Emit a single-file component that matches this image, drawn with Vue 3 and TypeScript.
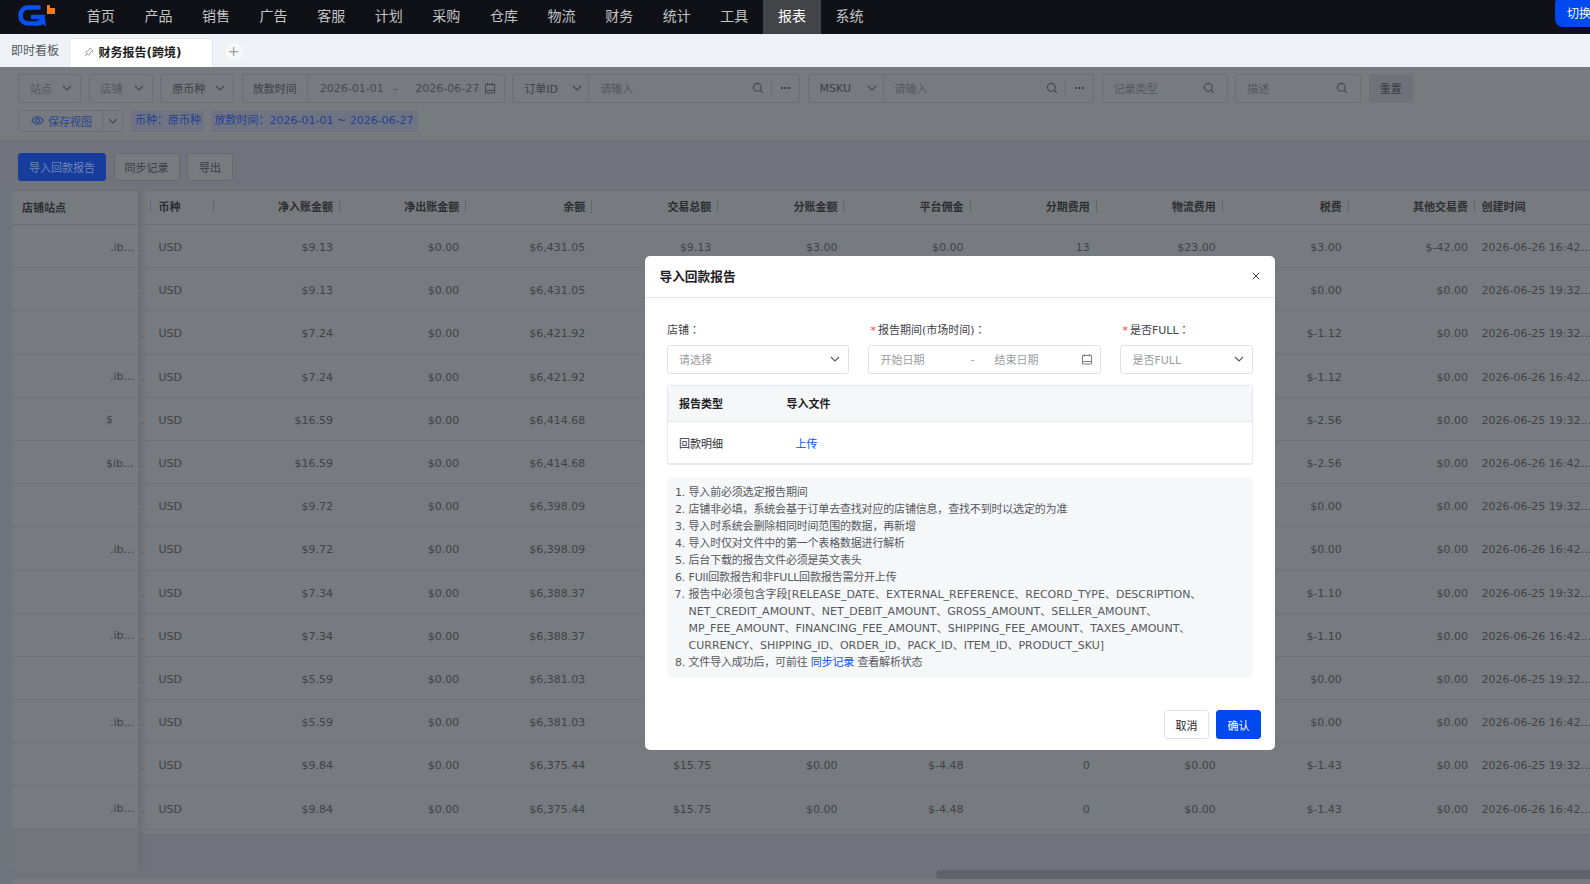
<script setup lang="ts">
const menus = ["首页", "产品", "销售", "广告", "客服", "计划", "采购", "仓库", "物流", "财务", "统计", "工具", "报表", "系统"];

const columns = ["净入账金额", "净出账金额", "余额", "交易总额", "分账金额", "平台佣金", "分期费用", "物流费用", "税费", "其他交易费"];

interface Row {
  shop: string;
  cells: string[];
  time: string;
}

const T25 = "2026-06-25 19:32:11";
const T26 = "2026-06-26 16:42:08";

// the five middle columns sit behind the dialog on most rows, so they stay empty there
function row(shop: string, net: string, balance: string, tax: string, other: string, time: string, mid: string[] = ["", "", "", "", ""]): Row {
  return { shop, cells: [net, "$0.00", balance, ...mid, tax, other], time };
}

const lastMid = ["$15.75", "$0.00", "$-4.48", "0", "$0.00"];

const rows: Row[] = [
  row(".ib...", "$9.13", "$6,431.05", "$3.00", "$-42.00", T26, ["$9.13", "$3.00", "$0.00", "13", "$23.00"]),
  row("", "$9.13", "$6,431.05", "$0.00", "$0.00", T25),
  row("", "$7.24", "$6,421.92", "$-1.12", "$0.00", T25),
  row(".ib...", "$7.24", "$6,421.92", "$-1.12", "$0.00", T26),
  row("$", "$16.59", "$6,414.68", "$-2.56", "$0.00", T25),
  row("$ib...", "$16.59", "$6,414.68", "$-2.56", "$0.00", T26),
  row("", "$9.72", "$6,398.09", "$0.00", "$0.00", T25),
  row(".ib...", "$9.72", "$6,398.09", "$0.00", "$0.00", T26),
  row("", "$7.34", "$6,388.37", "$-1.10", "$0.00", T25),
  row(".ib...", "$7.34", "$6,388.37", "$-1.10", "$0.00", T26),
  row("", "$5.59", "$6,381.03", "$0.00", "$0.00", T25),
  row(".ib...", "$5.59", "$6,381.03", "$0.00", "$0.00", T26),
  row("", "$9.84", "$6,375.44", "$-1.43", "$0.00", T25, lastMid),
  row(".ib...", "$9.84", "$6,375.44", "$-1.43", "$0.00", T26, lastMid),
];

const notes = [
  "导入前必须选定报告期间",
  "店铺非必填，系统会基于订单去查找对应的店铺信息，查找不到时以选定的为准",
  "导入时系统会删除相同时间范围的数据，再新增",
  "导入时仅对文件中的第一个表格数据进行解析",
  "后台下载的报告文件必须是英文表头",
  "FUll回款报告和非FULL回款报告需分开上传",
];
const fieldNote =
  "报告中必须包含字段[RELEASE_DATE、EXTERNAL_REFERENCE、RECORD_TYPE、DESCRIPTION、NET_CREDIT_AMOUNT、NET_DEBIT_AMOUNT、GROSS_AMOUNT、SELLER_AMOUNT、MP_FEE_AMOUNT、FINANCING_FEE_AMOUNT、SHIPPING_FEE_AMOUNT、TAXES_AMOUNT、CURRENCY、SHIPPING_ID、ORDER_ID、PACK_ID、ITEM_ID、PRODUCT_SKU]";
</script>

<template>
  <svg class="defs" aria-hidden="true">
    <symbol id="chev" viewBox="0 0 12 12"><path d="M2 4l4 4 4-4" fill="none" stroke="currentColor" stroke-width="1.1" /></symbol>
    <symbol id="search" viewBox="0 0 12 12"><circle cx="5.3" cy="5.3" r="3.9" fill="none" stroke="currentColor" stroke-width="1.1" /><path d="M8.1 8.1l2.6 2.6" fill="none" stroke="currentColor" stroke-width="1.3" /></symbol>
    <symbol id="cal" viewBox="0 0 12 12"><path d="M1.500 2.500h9v8.500h-9zM1.500 8.500h9M3.500 1v2.500M8.500 1v2.500" fill="none" stroke="currentColor" stroke-width="1" /></symbol>
    <symbol id="dots" viewBox="0 0 12 12"><circle cx="2.200" cy="6" r="1" fill="currentColor" /><circle cx="6" cy="6" r="1" fill="currentColor" /><circle cx="9.800" cy="6" r="1" fill="currentColor" /></symbol>
  </svg>

  <div class="page">
    <header class="topbar">
      <svg class="logo" viewBox="0 0 38 22" width="38" height="22">
        <path d="M22.500 2.500H10.500C5.500 2.500 2.500 5.800 2.500 10.500s3 8 8 8h9.500c3 0 4.500-1.600 4.500-6.500H13" fill="none" stroke="#0b50f5" stroke-width="4.600" />
        <path d="M19 14.500h8.500V22z" fill="#0b50f5" transform="rotate(-8 23 18)" />
        <path d="M29 0h3v3h5v6h-8z" fill="#f07a25" />
      </svg>
      <nav class="menu">
        <a v-for="m in menus" :key="m" class="menu-item" :class="{ active: m === '报表' }">{{ m }}</a>
      </nav>
      <div class="switch"><span>切换系统</span></div>
    </header>

    <div class="tabs">
      <span class="tab-plain">即时看板</span>
      <div class="tab-active">
        <svg class="pin" viewBox="0 0 12 12" width="10" height="10"><path d="M7 1.200l3.800 3.800-2 .6-1.800 1.800-.2 2-1.400.2-3-3 .2-1.400 2-.2L6.400 3.200z M4 8l-3 3" fill="none" stroke="#8b8f96" stroke-width="1" /></svg>
        <b>财务报告(跨境)</b>
      </div>
      <span class="tab-add">+</span>
    </div>

    <section class="filters">
      <div class="filter-row">
        <div class="box w-site ph"><span>站点</span><svg class="ic"><use href="#chev" /></svg></div>
        <div class="box w-shop ph"><span>店铺</span><svg class="ic"><use href="#chev" /></svg></div>
        <div class="box w-cur"><span>原币种</span><svg class="ic"><use href="#chev" /></svg></div>
        <div class="box w-date group">
          <span class="addon date-addon">放款时间</span>
          <span class="date-val">2026-01-01</span>
          <span class="date-sep">-</span>
          <span class="date-val end">2026-06-27</span>
          <svg class="ic"><use href="#cal" /></svg>
        </div>
        <div class="box w-order group">
          <span class="addon sel order-sel">订单ID<svg class="ic"><use href="#chev" /></svg></span>
          <span class="input ph">请输入</span>
          <svg class="ic"><use href="#search" /></svg>
          <span class="more"><svg class="ic"><use href="#dots" /></svg></span>
        </div>
        <div class="box w-msku group">
          <span class="addon sel msku-sel">MSKU<svg class="ic"><use href="#chev" /></svg></span>
          <span class="input ph">请输入</span>
          <svg class="ic"><use href="#search" /></svg>
          <span class="more"><svg class="ic"><use href="#dots" /></svg></span>
        </div>
        <div class="box w-type ph search-box"><span>记录类型</span><svg class="ic"><use href="#search" /></svg></div>
        <div class="box w-desc ph search-box"><span>描述</span><svg class="ic"><use href="#search" /></svg></div>
        <button class="reset">重置</button>
      </div>
      <div class="filter-row second">
        <div class="view">
          <span class="view-main">
            <svg viewBox="0 0 14 14" width="13" height="13"><path d="M1 7c1.500-2.800 3.500-4 6-4s4.500 1.200 6 4c-1.500 2.800-3.500 4-6 4S2.500 9.800 1 7z" fill="none" stroke="#2a4590" stroke-width="1.200" /><circle cx="7" cy="7" r="2" fill="none" stroke="#2a4590" stroke-width="1.200" /></svg>
            保存视图
          </span>
          <span class="view-arrow"><svg class="ic"><use href="#chev" /></svg></span>
        </div>
        <span class="tag t1">币种：原币种</span>
        <span class="tag t2">放款时间：2026-01-01 ~ 2026-06-27</span>
      </div>
    </section>

    <section class="actions">
      <button class="btn primary">导入回款报告</button>
      <button class="btn sync">同步记录</button>
      <button class="btn export">导出</button>
    </section>

    <section class="table-area">
      <div class="table">
        <div class="fixed-col">
          <div class="head-cell fixed-head">店铺站点</div>
          <div v-for="(r, i) in rows" :key="i" class="fixed-cell" :class="{ dollar: r.shop.startsWith('$') }"><span>{{ r.shop }}</span></div>
        </div>
        <div class="scroll-col">
          <div class="thead">
            <div class="c-gap"></div>
            <div class="c-cur th"><span>币种</span></div>
            <div v-for="c in columns" :key="c" class="c-num th"><span>{{ c }}</span></div>
            <div class="c-time th"><span>创建时间</span></div>
          </div>
          <div v-for="(r, i) in rows" :key="i" class="tr">
            <div class="c-gap td tail">..</div>
            <div class="c-cur td">USD</div>
            <div v-for="(v, j) in r.cells" :key="j" class="c-num td">{{ v }}</div>
            <div class="c-time td">{{ r.time }}</div>
          </div>
          <div class="tfoot"></div>
        </div>
      </div>
      <div class="scrollbar"><div class="thumb"></div></div>
    </section>

    <div class="modal">
      <div class="modal-head">
        <b>导入回款报告</b>
        <svg viewBox="0 0 10 10" width="8" height="8"><path d="M1 1l8 8M9 1l-8 8" stroke="#333" stroke-width="1.200" /></svg>
      </div>
      <div class="modal-body">
        <div class="form">
          <div class="field f-shop">
            <label>店铺<span class="colon">：</span></label>
            <div class="control ph-light"><span>请选择</span><svg class="ic dark"><use href="#chev" /></svg></div>
          </div>
          <div class="field f-date">
            <label><i>*</i>报告期间(市场时间)<span class="colon">：</span></label>
            <div class="control ph-light">
              <span class="d-start">开始日期</span><span class="d-dash">-</span><span class="d-end">结束日期</span>
              <svg class="ic"><use href="#cal" /></svg>
            </div>
          </div>
          <div class="field f-full">
            <label><i>*</i>是否FULL<span class="colon">：</span></label>
            <div class="control ph-light"><span>是否FULL</span><svg class="ic dark"><use href="#chev" /></svg></div>
          </div>
        </div>

        <div class="report">
          <div class="report-head"><span class="col-a">报告类型</span><span>导入文件</span></div>
          <div class="report-row"><span class="col-a">回款明细</span><a class="upload">上传</a></div>
        </div>

        <ol class="notes">
          <li v-for="n in notes" :key="n">{{ n }}</li>
          <li class="long">{{ fieldNote }}</li>
          <li>文件导入成功后，可前往 <a>同步记录</a> 查看解析状态</li>
        </ol>
      </div>
      <div class="modal-foot">
        <button class="m-btn">取消</button>
        <button class="m-btn ok">确认</button>
      </div>
    </div>
  </div>
</template>

<style scoped>
.defs {
  position: absolute;
  width: 0;
  height: 0;
}

.page {
  position: relative;
  width: 1590px;
  height: 884px;
  overflow: hidden;
  display: flex;
  flex-direction: column;
  font-family: "DejaVu Sans", "Noto Sans CJK SC", sans-serif;
  font-size: 11px;
  color: #3a3c40;
  background: #70747c;
}

.ic {
  width: 12px;
  height: 12px;
  flex: none;
  color: #44474c;
}

/* top bar */
.topbar {
  flex: none;
  height: 34px;
  display: flex;
  align-items: stretch;
  background: #0f1116;
  position: relative;
}
.logo {
  margin: 5px 0 0 18px;
  flex: none;
}
.menu {
  display: flex;
  margin-left: 16px;
}
.menu-item {
  width: 57.6px;
  font-size: 14px;
  line-height: 32px;
  text-align: center;
  color: #c3c5c8;
}
.menu-item.active {
  background: #434448;
  color: #fff;
}
.switch {
  position: absolute;
  right: 0;
  top: 0;
  width: 35px;
  height: 27px;
  overflow: hidden;
  background: #0048f0;
  border-radius: 2px 0 0 8px;
  color: #fff;
  font-size: 12px;
  line-height: 28px;
  padding-left: 12px;
  box-sizing: border-box;
  white-space: nowrap;
}

/* tabs */
.tabs {
  flex: none;
  height: 33px;
  display: flex;
  align-items: flex-end;
  background: #eef2f6;
  color: #55585d;
  font-size: 12px;
}
.tab-plain {
  width: 68.6px;
  padding-left: 11px;
  box-sizing: border-box;
  line-height: 32px;
}
.tab-active {
  width: 144px;
  height: 29px;
  box-sizing: border-box;
  background: #fff;
  border: 1px solid #e3e6ea;
  border-bottom: 0;
  border-radius: 3px 3px 0 0;
  display: flex;
  align-items: center;
  padding: 0 0 3px 14px;
  gap: 5px;
  color: #1d1f23;
}
.tab-active b {
  font-weight: 600;
  font-size: 12px;
}
.tab-add {
  width: 18px;
  height: 18px;
  margin: 0 0 6px 12px;
  border-radius: 50%;
  background: #f6f8fa;
  color: #9a9da2;
  text-align: center;
  line-height: 17px;
  font-size: 14px;
}

/* filters */
.filters {
  flex: none;
  height: 74px;
  box-sizing: border-box;
  padding: 7px 0 0 18px;
  background: #777a7e;
  border-bottom: 1px solid #6b6e73;
}
.filter-row {
  display: flex;
  gap: 7.6px;
  height: 28.700px;
}
.filter-row.second {
  height: 21.700px;
  margin-top: 7.300px;
  gap: 8px;
}
.box {
  box-sizing: border-box;
  border: 1px solid #6a6d72;
  border-radius: 3px;
  display: flex;
  align-items: center;
  justify-content: space-between;
  padding: 0 7px 0 11px;
  color: #3d3f44;
  white-space: nowrap;
}
.search-box {
  padding-right: 12px;
}
.ph {
  color: #55585d;
}
.w-site { width: 63px; }
.w-shop { width: 64px; }
.w-cur { width: 74px; }
.w-date { width: 263px; }
.w-order { width: 287.600px; }
.w-msku { width: 286.400px; }
.w-type { width: 126px; }
.w-desc { width: 125.800px; }
.group {
  padding: 0;
  justify-content: flex-start;
}
.addon {
  height: 100%;
  display: flex;
  align-items: center;
  box-sizing: border-box;
  border-right: 1px solid #6a6d72;
  flex: none;
}
.date-addon {
  width: 65px;
  justify-content: center;
}
.date-val {
  color: #47494e;
  margin-left: 12px;
  flex: none;
}
.date-sep {
  color: #47494e;
  margin: 0 18px 0 9.500px;
  flex: none;
}
.date-val.end {
  margin-left: 0;
}
.w-date .ic {
  margin-left: 5px;
}
.sel {
  justify-content: space-between;
  padding: 0 5px 0 11px;
}
.order-sel { width: 76px; }
.msku-sel { width: 75px; }
.input {
  flex: 1;
  padding-left: 11px;
}
.more {
  width: 27px;
  height: 16px;
  margin-left: 7px;
  border-left: 1px solid #6a6d72;
  display: flex;
  align-items: center;
  justify-content: center;
  flex: none;
}
.more .ic {
  color: #25272b;
  width: 11px;
}
.reset {
  width: 44.600px;
  border: 0;
  border-radius: 3px;
  background: #6f727a;
  color: #3a3c40;
  font: inherit;
  padding: 0;
}
.view {
  width: 105px;
  box-sizing: border-box;
  border: 1px solid #6a6d72;
  border-radius: 3px;
  display: flex;
  align-items: stretch;
  color: #2a4590;
}
.view-main {
  width: 84px;
  box-sizing: border-box;
  display: flex;
  align-items: center;
  gap: 4px;
  padding-left: 12px;
  border-right: 1px solid #6a6d72;
}
.view-arrow {
  flex: 1;
  display: flex;
  align-items: center;
  justify-content: center;
}
.tag {
  box-sizing: border-box;
  background: #6f7483;
  color: #23408f;
  line-height: 21px;
  padding: 0 4px;
  white-space: nowrap;
}
.t1 { width: 72.500px; }
.t2 { width: 207px; margin-left: -1px; }

/* action buttons */
.actions {
  flex: none;
  height: 49px;
  box-sizing: border-box;
  padding: 12px 0 0 18px;
  display: flex;
  gap: 7.600px;
  align-items: flex-start;
  background: #70737b;
}
.btn {
  height: 28px;
  width: 45.600px;
  padding: 0;
  border: 1px solid #66696e;
  border-radius: 3px;
  background: #777a7e;
  color: #3a3c40;
  font: inherit;
}
.btn.primary {
  width: 88px;
  background: #163d9c;
  border-color: #163d9c;
  color: #7385b8;
}
.btn.sync {
  width: 66px;
}

/* table */
.table-area {
  flex: 1;
  min-height: 0;
  margin-left: 12px;
  display: flex;
  flex-direction: column;
  background: #777a7e;
}
.table {
  height: 680px;
  flex: none;
  display: flex;
  overflow: hidden;
  background: #70737b;
}
.fixed-col {
  position: relative;
  width: 126px;
  flex: none;
  background: #72757c;
}
.fixed-col::after {
  content: "";
  position: absolute;
  left: 100%;
  top: 0;
  bottom: 0;
  width: 9px;
  background: linear-gradient(90deg, #6b6e73, rgba(107, 110, 115, 0));
}
.fixed-head {
  height: 35px;
  display: flex;
  align-items: center;
  padding: 0 0 2px 10px;
  font-weight: 600;
  color: #2c2e32;
  background: #777a7e;
  border-top: 1px solid #6d7075;
  box-sizing: border-box;
  border-bottom: 1px solid #6a6d72;
}
.fixed-cell {
  height: 43.200px;
  box-sizing: border-box;
  background: #777a7e;
  border-bottom: 1px solid #6d7075;
  display: flex;
  align-items: center;
  padding: 2px 0 0 98px;
  color: #404247;
  white-space: nowrap;
}
.fixed-cell.dollar {
  padding-left: 94px;
}
.scroll-col {
  flex: 1;
  min-width: 0;
  overflow: hidden;
}
.thead,
.tr {
  display: flex;
  background: #777a7e;
  box-sizing: border-box;
  border-bottom: 1px solid #6b6e73;
  width: 1455px;
}
.thead {
  height: 35px;
  align-items: stretch;
  font-weight: 600;
  color: #2c2e32;
  border-top: 1px solid #6d7075;
}
.tr {
  height: 43.200px;
  align-items: center;
  border-bottom-color: #6d7075;
}
.tfoot {
  height: 4px;
  background: #777a7e;
  border-bottom: 1px solid #6b6e73;
  width: 1455px;
}
.c-gap {
  width: 12.500px;
  flex: none;
}
.c-cur {
  width: 63px;
  flex: none;
  padding-left: 8px;
  box-sizing: border-box;
}
.c-num {
  width: 126.100px;
  flex: none;
  text-align: right;
  padding-right: 6.500px;
  box-sizing: border-box;
}
.c-time {
  width: 118px;
  flex: none;
  padding-left: 7px;
  box-sizing: border-box;
  white-space: nowrap;
  overflow: hidden;
  text-overflow: ellipsis;
}
.th {
  position: relative;
  line-height: 29px;
  padding-top: 1.500px;
}
.th::before {
  content: "";
  position: absolute;
  left: -0.500px;
  top: 9px;
  bottom: 11px;
  width: 1px;
  background: #65686d;
}
.td {
  color: #404247;
  padding-top: 3px;
}

.scrollbar {
  height: 9px;
  background: #70737b;
  position: relative;
  flex: none;
}
.thumb {
  position: absolute;
  left: 924px;
  right: 0;
  top: 0;
  bottom: 0;
  background: #5f626a;
  border-radius: 4px 0 0 4px;
}

/* modal */
.modal {
  position: absolute;
  left: 645px;
  top: 256px;
  width: 630px;
  height: 494px;
  background: #fff;
  border-radius: 5px;
  display: flex;
  flex-direction: column;
  color: #3e4146;
}
.modal-head {
  height: 42px;
  flex: none;
  box-sizing: border-box;
  border-bottom: 1px solid #e5e7ee;
  display: flex;
  align-items: center;
  justify-content: space-between;
  padding: 0 15.500px 2px 14.500px;
}
.modal-head b {
  font-size: 12.700px;
  font-weight: 600;
  color: #1f2125;
}
.modal-body {
  flex: 1;
  padding: 22.500px 22px 0;
}
.form {
  display: flex;
  gap: 19px;
}
.field label {
  display: block;
  height: 17px;
  line-height: 17px;
  margin-bottom: 7.500px;
  white-space: nowrap;
}
.field label i {
  color: #f04444;
  font-style: normal;
  margin-right: 2px;
}
.colon {
  font-family: "Noto Sans CJK TC", sans-serif;
}
.f-shop { width: 182.400px; }
.f-date { width: 233px; }
.f-full { width: 132.600px; }
.f-date label { padding-left: 2px; }
.f-full label { padding-left: 2px; }
.control {
  height: 28.500px;
  box-sizing: border-box;
  border: 1px solid #dfe2e8;
  border-radius: 3px;
  display: flex;
  align-items: center;
  justify-content: space-between;
  padding: 0 7px 0 11px;
  color: #9a9ca1;
}
.d-start { width: 90px; }
.d-dash { width: 24px; }
.d-end { flex: 1; }
.control .ic { color: #7d8085; }
.control .ic.dark { color: #55585d; }

.report {
  margin-top: 11.500px;
  height: 80px;
  box-sizing: border-box;
  border: 1px solid #e5e7ee;
  border-bottom-width: 2px;
  border-radius: 3px;
}
.report-head {
  height: 36px;
  box-sizing: border-box;
  padding-bottom: 1.500px;
  background: #f6f7f9;
  border-bottom: 1px solid #e5e7ee;
  display: flex;
  align-items: center;
  font-weight: 600;
  color: #1f2125;
}
.report-row {
  height: 42px;
  display: flex;
  align-items: center;
  color: #2b2d31;
}
.col-a {
  width: 118.500px;
  padding-left: 11px;
  box-sizing: border-box;
}
.upload {
  margin-left: 9px;
  color: #0a4ff0;
}
.notes {
  margin: 12px 0 0;
  height: 201px;
  box-sizing: border-box;
  padding: 6.500px 45px 0 21.500px;
  background: #f6f7f9;
  border-radius: 4px;
  line-height: 17px;
  color: #55585d;
  letter-spacing: -0.180px;
}
.notes .long {
  letter-spacing: 0;
}
.notes a {
  color: #0a4ff0;
}
.modal-foot {
  flex: none;
  height: 40px;
  display: flex;
  align-items: flex-start;
  justify-content: flex-end;
  gap: 7px;
  padding-right: 14px;
}
.m-btn {
  width: 45px;
  height: 29px;
  border: 1px solid #dfe2e8;
  border-radius: 3px;
  background: #fff;
  color: #1f2125;
  font: inherit;
  padding: 0;
}
.m-btn.ok {
  background: #0048f0;
  border-color: #0048f0;
  color: #fff;
}
</style>

<style>
html,
body {
  margin: 0;
  overflow: hidden;
}
</style>
